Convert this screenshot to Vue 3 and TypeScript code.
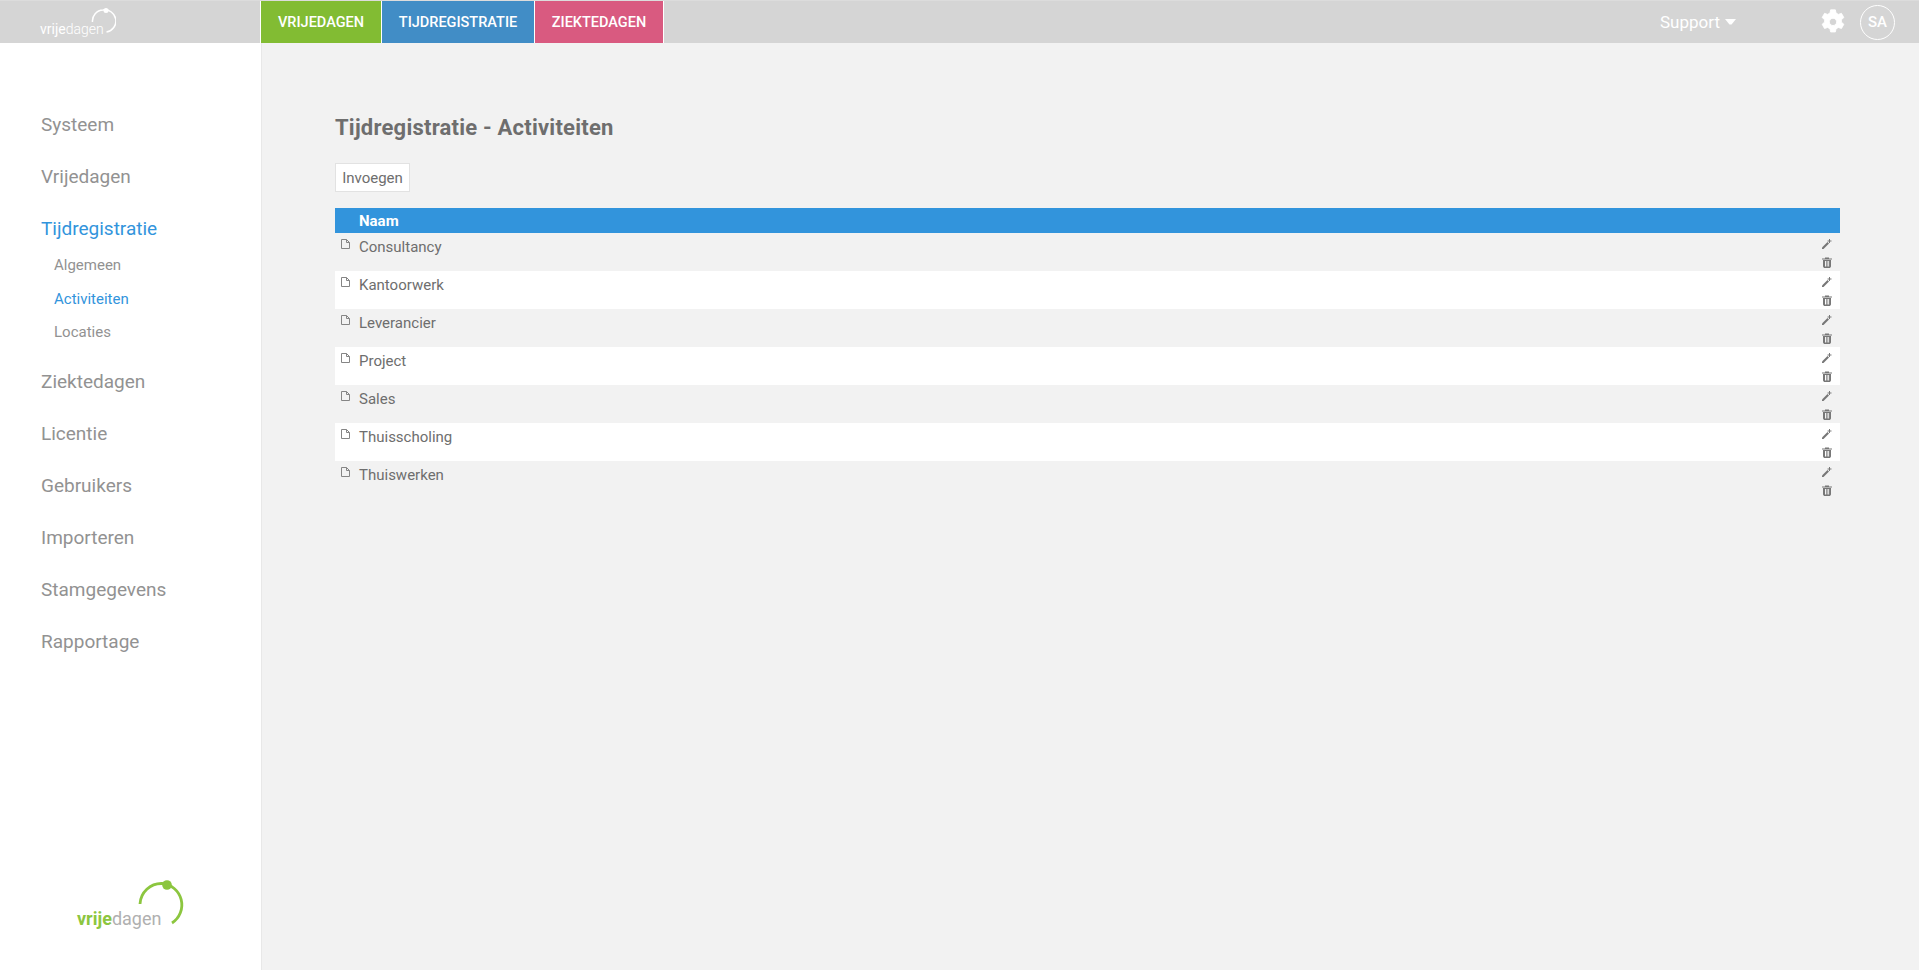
<script setup lang="ts">
const items: string[] = ['Consultancy', 'Kantoorwerk', 'Leverancier', 'Project', 'Sales', 'Thuisscholing', 'Thuiswerken']
const navTop: string[] = ['Systeem', 'Vrijedagen']
const navBottom: string[] = ['Ziektedagen', 'Licentie', 'Gebruikers', 'Importeren', 'Stamgegevens', 'Rapportage']
</script>

<template>
  <div class="page">
    <header class="topbar">
      <div class="brand">
        <div class="brand-logo">
          <span class="brand-text"><span class="b1">vrije</span>dagen</span>
          <svg class="brand-arc" width="26" height="32" viewBox="0 0 26 32">
            <path d="M2.500 18 A11 11 0 0 1 13 6 A11 11 0 0 1 16.500 28" fill="none" stroke="#fff" stroke-width="1.500" />
            <circle cx="16" cy="6.500" r="2.500" fill="#fff" />
          </svg>
        </div>
      </div>
      <a class="tab green">VRIJEDAGEN</a>
      <a class="tab blue">TIJDREGISTRATIE</a>
      <a class="tab pink">ZIEKTEDAGEN</a>
      <div class="spacer"></div>
      <div class="support">Support <svg width="11" height="6" viewBox="0 0 11 6"><path d="M0 0 H11 L6.500 5.500 H4.500 Z" fill="#fff" /></svg></div>
      <svg class="gear" width="26" height="26" viewBox="0 0 24 24">
        <path fill="#fff" stroke="#fff" stroke-width="0.800" stroke-linejoin="round" fill-rule="evenodd" d="M9.800 0.800 h4.400 l0.600 3 a8.500 8.500 0 0 1 2.100 1.200 l2.900 -1 l2.200 3.900 l-2.300 2 a8.500 8.500 0 0 1 0 2.200 l2.300 2 l-2.200 3.900 l-2.900 -1 a8.500 8.500 0 0 1 -2.100 1.200 l-0.600 3 h-4.400 l-0.600 -3 a8.500 8.500 0 0 1 -2.100 -1.200 l-2.900 1 l-2.200 -3.900 l2.300 -2 a8.500 8.500 0 0 1 0 -2.200 l-2.300 -2 l2.200 -3.900 l2.900 1 a8.500 8.500 0 0 1 2.100 -1.200 Z M12 8.500 a3.400 3.400 0 1 0 0.010 0 Z" />
      </svg>
      <div class="avatar">SA</div>
    </header>

    <div class="body">
      <aside class="sidebar">
        <nav class="nav">
          <a v-for="n in navTop" :key="n" class="nav-item">{{ n }}</a>
          <a class="nav-item active">Tijdregistratie</a>
          <div class="subnav">
            <a class="sub-item">Algemeen</a>
            <a class="sub-item active">Activiteiten</a>
            <a class="sub-item">Locaties</a>
          </div>
          <a v-for="n in navBottom" :key="n" class="nav-item">{{ n }}</a>
        </nav>
        <div class="side-logo">
          <span class="side-text"><span class="g">vrije</span>dagen</span>
          <svg class="side-arc" width="52" height="50" viewBox="0 0 52 50">
            <path d="M5 26 A21.500 21.500 0 0 1 27 5.500 A21.500 21.500 0 0 1 37 45" fill="none" stroke="#8cc63f" stroke-width="2.800" />
            <circle cx="32" cy="7" r="4.800" fill="#8cc63f" />
          </svg>
        </div>
      </aside>

      <main class="main">
        <h1 class="title">Tijdregistratie - Activiteiten</h1>
        <button class="btn" type="button">Invoegen</button>
        <div class="table">
          <div class="thead">Naam</div>
          <div v-for="item in items" :key="item" class="row">
            <svg class="doc" width="9" height="10" viewBox="0 0 9 10">
              <path d="M0.500 0.500 H5.500 L8.500 3.500 V9.500 H0.500 Z M5.500 0.500 V3.500 H8.500" fill="none" stroke="#858585" stroke-width="1" />
            </svg>
            <span class="name">{{ item }}</span>
            <div class="actions">
              <svg width="10" height="10" viewBox="0 0 10 10">
                <path d="M0 8.500 L5.500 3 L7 4.500 L1.500 10 H0 Z" fill="#777" />
                <path d="M8 0 V1.500 H9.500 V2.500 H8 V4 H7 V2.500 H5.500 V1.500 H7 V0 Z" fill="#777" />
              </svg>
              <svg width="10" height="11" viewBox="0 0 10 11">
                <path fill="#777" fill-rule="evenodd" d="M0 1.500 H3 V0.500 H7 V1.500 H10 V2.500 H0 Z M1 3 H9 V9.500 L8 11 H2 L1 9.500 Z M3 4 V9.500 H4 V4 Z M4.700 4 V9.500 H5.500 V4 Z M6.200 4 V9.500 H7.100 V4 Z" />
              </svg>
            </div>
          </div>
        </div>
      </main>
    </div>
  </div>
</template>

<style>
html, body { margin: 0; padding: 0; background: #f2f2f2; }
</style>

<style scoped>
.page {
  width: 1919px;
  height: 970px;
  display: flex;
  flex-direction: column;
  overflow: hidden;
  font-family: "Roboto", "Liberation Sans", sans-serif;
  color: #6e6e6e;
}
.topbar {
  height: 43px;
  flex: none;
  display: flex;
  align-items: stretch;
  background: #d5d5d5;
  box-sizing: border-box;
  border-top: 1px solid #dcdcdc;
}
.brand { width: 260px; flex: none; display: flex; padding-left: 40px; box-sizing: border-box; }
.brand-logo { position: relative; width: 80px; height: 42px; }
.brand-text { position: absolute; left: 0; top: 18px; font-size: 14px; color: #fff; line-height: 20px; font-weight: 300; }
.brand-text .b1 { font-weight: 400; }
.brand-arc { position: absolute; left: 50px; top: 3px; }
.tab {
  display: flex;
  align-items: center;
  justify-content: center;
  color: #fff;
  font-size: 14.500px;
  font-weight: 500;
  border-left: 1px solid #fff;
  box-sizing: border-box;
}
.green { width: 121px; background: #82bc33; }
.blue { width: 153px; background: #418dc6; }
.pink { width: 130px; background: #d95a80; border-right: 1px solid #fff; }
.spacer { flex: 1; }
.support {
  display: flex;
  align-items: center;
  gap: 5px;
  color: #fff;
  font-size: 17px;
  margin-right: 84px;
}
.gear { align-self: center; margin-right: 14px; }
.avatar {
  align-self: center;
  width: 35px;
  height: 35px;
  border: 1px solid #fff;
  border-radius: 50%;
  box-sizing: border-box;
  display: flex;
  align-items: center;
  justify-content: center;
  color: #fff;
  font-size: 15px;
  font-weight: 500;
  margin-right: 24px;
}
.body { flex: 1; display: flex; min-height: 0; }
.sidebar {
  width: 262px;
  flex: none;
  background: #fff;
  border-right: 1px solid #e8e8e8;
  box-sizing: border-box;
  display: flex;
  flex-direction: column;
  justify-content: space-between;
  padding: 63px 0 0 41px;
}
.nav { display: flex; flex-direction: column; }
.nav-item {
  font-size: 19px;
  line-height: 22px;
  color: #929292;
  padding: 8px 0 22px;
  height: 52px;
  box-sizing: border-box;
}
.nav-item.active { color: #3294dc; height: auto; padding-bottom: 0; }
.subnav { display: flex; flex-direction: column; padding: 9px 0 13px 13px; }
.sub-item { font-size: 15px; line-height: 20px; color: #929292; height: 33.500px; padding-top: 6px; box-sizing: border-box; }
.sub-item.active { color: #3294dc; }
.side-logo { position: relative; height: 92px; width: 150px; margin-left: 35px; }
.side-text { position: absolute; left: 1px; top: 29px; font-size: 18px; line-height: 24px; color: #b0b0b0; }
.side-text .g { color: #8cc63f; font-weight: 700; }
.side-arc { position: absolute; left: 59px; top: 0; }
.main { flex: 1; padding: 0 79px 0 73px; min-width: 0; }
.title {
  margin: 72px 0 0;
  font-size: 22px;
  line-height: 26px;
  font-weight: 700;
  letter-spacing: 0.220px;
  color: #6e6e6e;
}
.btn {
  display: block;
  margin: 22px 0 0;
  height: 29px;
  width: 75px;
  padding: 0;
  background: #fff;
  border: 1px solid #e2e2e2;
  font: inherit;
  font-size: 15px;
  color: #6e6e6e;
}
.table { margin-top: 16px; }
.thead {
  height: 25px;
  background: #3294dc;
  color: #fff;
  font-size: 15px;
  font-weight: 700;
  line-height: 26px;
  padding-left: 24px;
}
.row {
  height: 38px;
  display: flex;
  align-items: flex-start;
  position: relative;
  font-size: 15px;
  color: #6e6e6e;
}
.row:nth-child(odd) { background: #fff; }
.doc { margin: 6px 0 0 6px; flex: none; }
.name { margin-left: 9px; line-height: 18px; padding-top: 5px; }
.actions {
  margin-left: auto;
  margin-right: 8px;
  display: flex;
  flex-direction: column;
  align-items: center;
  gap: 8px;
  padding-top: 6px;
}
</style>
